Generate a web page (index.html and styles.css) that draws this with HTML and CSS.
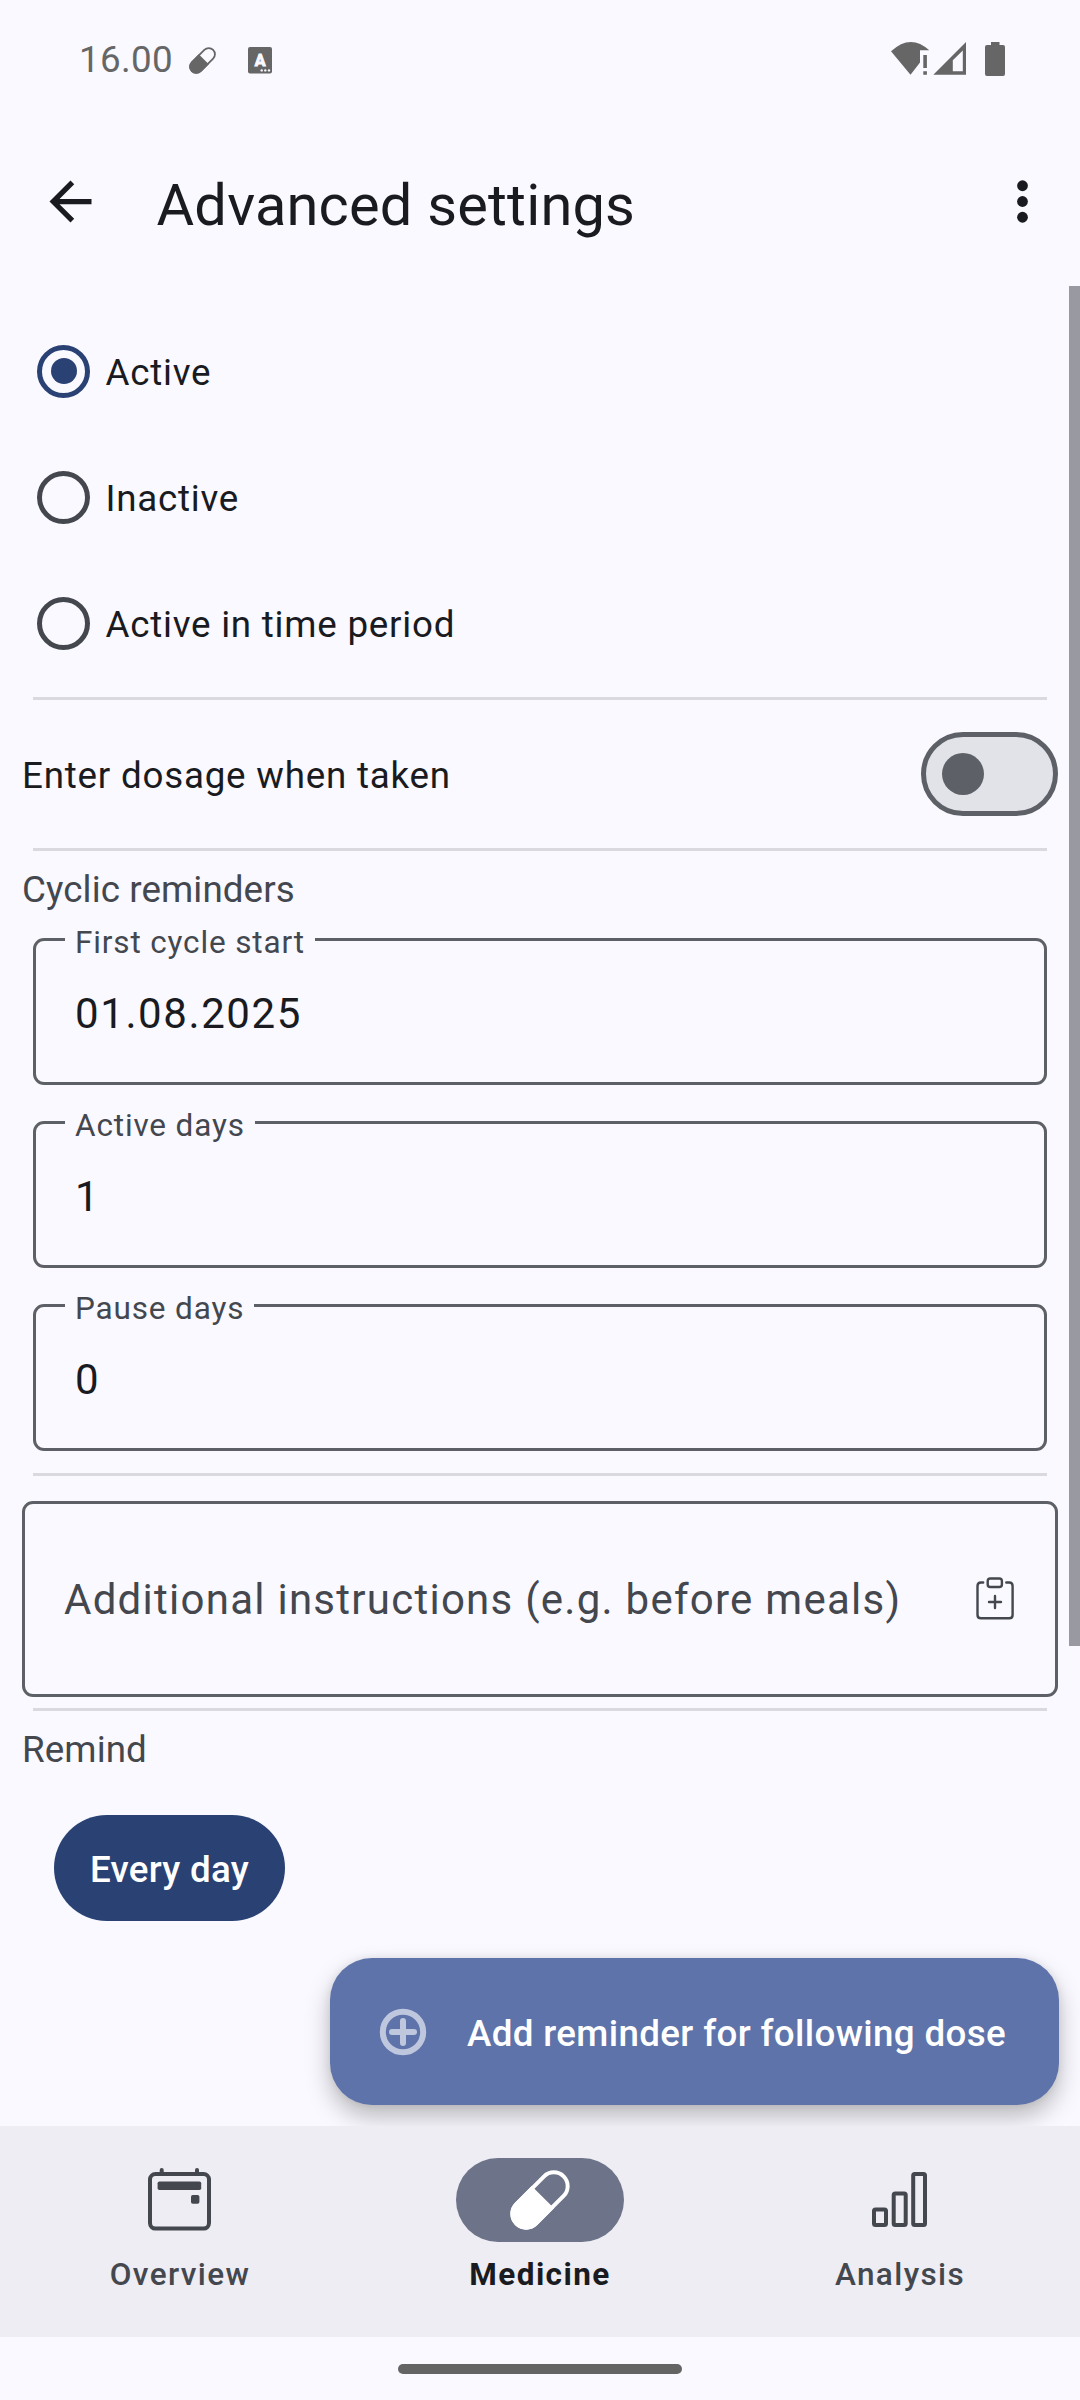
FILE: index.html
```html
<!DOCTYPE html>
<html lang="en">
<head>
<meta charset="utf-8">
<title>Advanced settings</title>
<link rel="stylesheet" href="styles.css">
</head>
<body>
<svg width="0" height="0" class="defs">
  <symbol id="pill" viewBox="0 0 60 60">
    <g transform="rotate(-45 30 30)">
      <rect x="-3.4" y="16.2" width="66.8" height="27.6" rx="13.8" fill="none" stroke="currentColor" stroke-width="4"/>
      <path d="M34 14.2H10.4a15.8 15.8 0 0 0 0 31.6H34z" fill="currentColor"/>
    </g>
  </symbol>
</svg>
<div class="screen">
  <header class="status">
    <span class="clock">16.00</span>
    <svg class="status-pill"><use href="#pill"/></svg>
    <svg class="status-app" width="24" height="27" viewBox="0 0 24 27">
      <rect width="24" height="26.4" rx="2" fill="currentColor"/>
      <text x="12" y="19" text-anchor="middle" class="app-letter">A</text>
      <g fill="#f9f9ff"><circle cx="13.7" cy="23.4" r="1.2"/><circle cx="17.3" cy="23.4" r="1.2"/><circle cx="21" cy="23.4" r="1.2"/></g>
    </svg>
    <svg class="status-system" width="116" height="36" viewBox="890 41 116 36" fill="currentColor">
      <path d="M891 51.3Q910.5 33 929.3 50.3H920V62.5L910.5 74.7z"/>
      <path d="M923.3 55h3.6v13h-3.6zM923.3 71.3h3.6v3.4h-3.6z"/>
      <path fill-rule="evenodd" d="M933.3 74.8L966 42V74.8zM952.8 60.2V71.3H962.8V50.4z"/>
      <path d="M991 42h8.5v3h3.5q2 0 2 2v27q0 2-2 2h-16q-2 0-2-2v-27q0-2 2-2h4z"/>
    </svg>
  </header>

  <div class="appbar">
    <svg class="appbar-icon" viewBox="0 0 24 24"><path d="M20 11H7.83l5.59-5.59L12 4l-8 8 8 8 1.41-1.41L7.83 13H20v-2z" fill="currentColor"/></svg>
    <h1>Advanced settings</h1>
    <svg class="appbar-icon" viewBox="0 0 24 24" fill="currentColor"><circle cx="12" cy="6" r="2.05"/><circle cx="12" cy="12" r="2.05"/><circle cx="12" cy="18" r="2.05"/></svg>
  </div>

  <main class="content">
    <div class="radios">
      <label class="radio"><span class="dot dot-on"></span><span>Active</span></label>
      <label class="radio"><span class="dot"></span><span>Inactive</span></label>
      <label class="radio"><span class="dot"></span><span>Active in time period</span></label>
    </div>
    <div class="divider"></div>
    <div class="switch-row">
      <span class="switch-label">Enter dosage when taken</span>
      <span class="switch"><span class="thumb"></span></span>
    </div>
    <div class="divider"></div>
    <h2>Cyclic reminders</h2>
    <div class="fields">
      <div class="field"><span class="field-label">First cycle start</span><span class="field-value">01.08.2025</span></div>
      <div class="field"><span class="field-label">Active days</span><span class="field-value">1</span></div>
      <div class="field"><span class="field-label">Pause days</span><span class="field-value">0</span></div>
    </div>
    <div class="divider"></div>
    <div class="instructions">
      <span>Additional instructions (e.g. before meals)</span>
      <svg width="38" height="44" viewBox="0 0 38 44" fill="none" stroke="currentColor" stroke-width="2.4" stroke-linecap="round">
        <path d="M7.2 5.5H5Q1.5 5.5 1.5 9V38Q1.5 41.3 5 41.3H33.3Q36.6 41.3 36.6 38V9Q36.6 5.5 33.3 5.5H30.3"/>
        <rect x="11.7" y="1.5" width="14.2" height="8.5" rx="2.6"/>
        <path d="M19 19v12M13 25h12"/>
      </svg>
    </div>
    <div class="divider"></div>
    <h2>Remind</h2>
    <button class="chip">Every day</button>
    <div class="scrollbar"></div>
    <button class="fab">
      <svg width="48" height="48" viewBox="0 0 48 48" fill="none" stroke="currentColor" stroke-width="6"><circle cx="24" cy="24" r="20.2"/><path d="M24 13v22M13 24h22" stroke-linecap="round" stroke-width="6"/></svg>
      <span>Add reminder for following dose</span>
    </button>
  </main>

  <nav class="nav">
    <a class="nav-item">
      <span class="nav-icon"><svg width="64" height="64" viewBox="0 0 64 64" fill="currentColor">
        <rect x="2" y="6" width="59" height="54.6" rx="5.5" fill="none" stroke="currentColor" stroke-width="4"/>
        <rect x="11.7" y="0" width="4" height="7" rx="2"/><rect x="47" y="0" width="4" height="7" rx="2"/>
        <rect x="9.6" y="13.4" width="43.6" height="8.6" rx="1.8"/><rect x="43" y="27" width="8.4" height="8.7" rx="1.8"/>
      </svg></span>
      <span>Overview</span>
    </a>
    <a class="nav-item nav-active">
      <span class="nav-icon"><svg width="60" height="60"><use href="#pill"/></svg></span>
      <span>Medicine</span>
    </a>
    <a class="nav-item">
      <span class="nav-icon"><svg width="64" height="64" viewBox="0 0 64 64" fill="none" stroke="currentColor" stroke-width="4">
        <rect x="6" y="41.4" width="12" height="15.5" rx="1.5"/><rect x="25.7" y="25.6" width="12" height="31.3" rx="1.5"/><rect x="45.2" y="6" width="11.8" height="50.9" rx="1.5"/>
      </svg></span>
      <span>Analysis</span>
    </a>
  </nav>
  <footer class="gesture"><span></span></footer>
</div>
</body>
</html>
```
FILE: styles.css
```css
* { box-sizing: border-box; }
body { margin: 0; background: #f9f9ff; font-family: Roboto, "Noto Sans", sans-serif; color: #1a1b20; }
.defs { position: absolute; }
svg { display: block; flex: none; overflow: visible; }
button { border: 0; font: inherit; color: #fff; }
.screen { width: 1080px; height: 2400px; display: flex; flex-direction: column; overflow: hidden; }

.status { height: 118px; flex: none; display: flex; align-items: center; color: #666; padding: 0 74px 0 79px; }
.clock { font-size: 36.75px; line-height: 44px; width: 110px; letter-spacing: 0.35px; padding-top: 1px; }
.status-pill { width: 27px; height: 27px; margin-top: 3px; }
.status-app { margin: 3px 0 0 32px; }
.app-letter { font: 700 16px Roboto, sans-serif; fill: #f9f9ff; stroke: #f9f9ff; stroke-width: 1px; }
.status-system { margin-left: auto; }

.appbar { height: 168px; flex: none; display: flex; align-items: center; padding: 0 26px 2px 39px; }
.appbar-icon { width: 63px; height: 63px; }
h1 { margin: 8px auto 0 54.5px; font-size: 57.75px; line-height: 68px; font-weight: 400; letter-spacing: 0.2px; }

.content { position: relative; height: 1840px; flex: none; overflow: hidden; display: flex; flex-direction: column; padding: 22px 22px 0; }
.radio { height: 126px; display: flex; align-items: center; gap: 15.5px; padding-left: 15.5px; font-size: 36.75px; letter-spacing: 0.76px; }
.radio span:last-child { margin-top: 3px; }
.dot { width: 53px; height: 53px; margin-left: -0.5px; border: 5.25px solid #44474e; border-radius: 50%; display: grid; place-items: center; }
.dot-on { border-color: #2a4174; }
.dot-on::after { content: ""; width: 26px; height: 26px; border-radius: 50%; background: #2a4174; }
.divider { height: 3px; flex: none; margin: 0 11px; background: #dad9e0; }
.radios { margin-bottom: 11px; }
.switch-row { height: 148px; flex: none; display: flex; align-items: center; justify-content: space-between; font-size: 36.75px; letter-spacing: 0.78px; }
.switch-label { padding-top: 2px; }
.switch { width: 137px; height: 84px; border: 5.25px solid #5d6066; border-radius: 42px; background: #e2e2e9; display: flex; align-items: center; padding-left: 16px; }
.thumb { width: 42px; height: 42px; border-radius: 50%; background: #5d6066; }
h2 { margin: 17px 0 0; font-size: 36.75px; line-height: 43px; font-weight: 400; letter-spacing: 0.1px; color: #44474e; }
.fields { margin: 27px 11px 22px; display: flex; flex-direction: column; gap: 36px; }
.field { position: relative; height: 147px; border: 3px solid #5d6066; border-radius: 11px; padding: 3px 39px 0; display: flex; align-items: center; font-size: 42px; letter-spacing: 1.6px; }
.field-label { position: absolute; left: 29px; top: -18px; padding: 0 10px; background: #f9f9ff; color: #44474e; font-size: 31.5px; line-height: 40px; letter-spacing: 0.85px; }
.instructions { height: 196px; flex: none; margin: 25px 0 11px; border: 3px solid #5d6066; border-radius: 11px; padding: 0 41px 0 39px; display: flex; align-items: center; justify-content: space-between; color: #44474e; font-size: 42px; letter-spacing: 1.26px; }
.chip { align-self: flex-start; width: 231px; height: 106px; margin: 44px 0 0 32px; padding: 3px 0 0; border-radius: 53px; background: #2a4174; font-size: 36.75px; font-weight: 500; letter-spacing: 0.26px; }
.scrollbar { position: absolute; right: 0; top: 0; width: 11px; height: 1360px; background: #9999a2; }
.fab { position: absolute; left: 330px; top: 1672px; width: 729px; height: 147px; border-radius: 42px; padding: 0 0 0 49px; display: flex; align-items: center; gap: 40px; background: #5e73aa; font-size: 36.75px; font-weight: 500; letter-spacing: 0.35px; box-shadow: 0 12px 24px rgba(0,0,0,.26), 0 0 8px rgba(0,0,0,.08); }
.fab svg { color: #bec7dd; }
.fab span { margin-top: 3px; white-space: nowrap; }

.nav { height: 211px; flex: none; background: #ededf3; display: grid; grid-template-columns: repeat(3, 1fr); padding-top: 32px; }
.nav-item { display: flex; flex-direction: column; align-items: center; gap: 13px; color: #44474e; font-size: 31.5px; line-height: 40px; font-weight: 500; letter-spacing: 1.4px; }
.nav-icon { width: 168px; height: 84px; border-radius: 42px; display: grid; place-items: center; }
.nav-active { color: #1a1b20; font-weight: 700; }
.nav-active .nav-icon { background: #6d7388; color: #fff; }
.gesture { flex: 1; display: flex; justify-content: center; padding-top: 27px; }
.gesture span { width: 284px; height: 10px; border-radius: 5px; background: #646464; }
```
